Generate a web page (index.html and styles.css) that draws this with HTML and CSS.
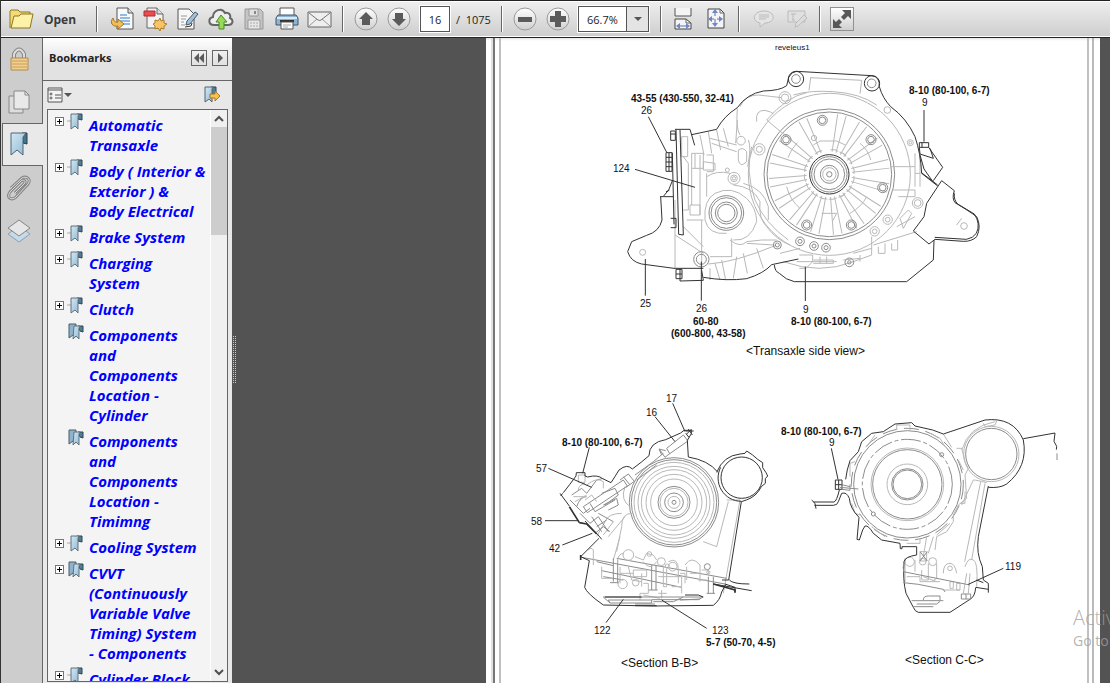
FILE: index.html
```
<!DOCTYPE html>
<html lang="en">
  <head>
    <meta charset="utf-8" />
    <title>Reader</title>
    <link rel="stylesheet" href="styles.css">
  </head>
  <body>
    <!-- shared icons -->
    <svg class="defs" aria-hidden="true">
      <linearGradient id="blue" x1="0" y1="0" x2="1" y2="1">
        <stop offset="0" stop-color="#d3e8f5" />
        <stop offset="1" stop-color="#8fb8d2" />
      </linearGradient>
      <linearGradient id="round" x1="0" y1="0" x2="0" y2="1">
        <stop offset="0" stop-color="#fff" />
        <stop offset="1" stop-color="#cfcfcf" />
      </linearGradient>
      <symbol id="mark" viewBox="0 0 17 18">
        <path d="M0 8h4" stroke="#aaa" />
        <path d="M10 1h5v6l-4-1z" fill="#4f8098" stroke="#33424c" />
        <path d="M4 1h8l-1 2v13l-3-3-4 3z" fill="url(#blue)" stroke="#60717c" />
      </symbol>
      <symbol id="marks" viewBox="0 0 17 18">
        <path d="M2 1h7v13l-3-2-4 3z" fill="#8db4cc" stroke="#4b5c67" />
        <path d="M11 3h5v6l-3-1z" fill="#4f8098" stroke="#33424c" />
        <path d="M7 3h6l-1 2v11l-3-3-3 3z" fill="url(#blue)" stroke="#60717c" />
      </symbol>
    </svg>

    <header class="toolbar">
      <button class="open" type="button">
        <svg width="26" height="22" viewBox="0 0 26 22">
          <path d="M1 20V3l1-1h7l2 2h10v4" fill="#f3dc78" stroke="#8e7420" />
          <path d="M2 20 5 8h5l2-2h12l-3 14z" fill="#fdf3a8" stroke="#8e7420" stroke-linejoin="round" />
        </svg>
        Open
      </button>
      <div class="group">
        <button type="button" aria-label="Export">
          <svg width="24" height="24" viewBox="0 0 24 24">
            <path d="M7 1h11l5 5v16H7z" fill="#f8f8f8" stroke="#555" />
            <path d="M18 1v5h5" fill="#ddd" stroke="#555" />
            <path d="M10 8h7M10 11h10M10 14h10M13 17h7" stroke="#2b7fd6" />
            <path d="M3 11c-4 5 0 9 5 8v3l6-5-6-5v3c-3 1-4-1-5-4z" fill="#f3bf55" stroke="#a5762a" />
          </svg>
        </button>
        <button type="button" aria-label="Create PDF">
          <svg width="24" height="24" viewBox="0 0 24 24">
            <path d="M4 1h10l6 6v14H4z" fill="#f2f2f2" stroke="#666" />
            <path d="M14 1v6h6" fill="#ddd" stroke="#666" />
            <path d="M1 4h11v5H1z" fill="#ec4c50" stroke="#a92c30" />
            <path d="m17 11 1 3 3-1v3l3 1-3 2v3l-3-1-1 3-2-3-3 1v-3l-2-2 2-1v-3l3 1z" fill="#f6c568" stroke="#b07d28" />
          </svg>
        </button>
        <button type="button" aria-label="Edit">
          <svg width="24" height="24" viewBox="0 0 24 24">
            <path d="M2 2h11l5 5v15H2z" fill="#f7f7f7" stroke="#555" />
            <path d="M5 9h6M5 12h5M5 15h3M5 18h4" stroke="#999" />
            <path d="m10 18 1-4 8-9 3 2-8 10z" fill="#a4c0d6" stroke="#445a6c" />
            <path d="m9 20 6-1 1-3" fill="none" stroke="#333" />
          </svg>
        </button>
        <button type="button" aria-label="Upload">
          <svg width="26" height="24" viewBox="0 0 26 24">
            <path d="M6 18C0 18 0 11 5 10 5 3 14 0 17 6c4-1 6 2 5 5 4 2 3 7-2 7z" fill="#eee" stroke="#666" stroke-width="2" />
            <path d="m13 8 6 7h-3v7h-5v-7H8z" fill="#97d95a" stroke="#4a8b25" />
          </svg>
        </button>
        <button type="button" aria-label="Save">
          <svg width="24" height="24" viewBox="0 0 24 24">
            <path d="M3 2h15l3 3v17H3z" fill="#c4c4c4" stroke="#999" />
            <path d="M7 2h9v7H7z" fill="#e2e2e2" stroke="#999" />
            <path d="M13 4v3" stroke="#888" stroke-width="2" />
            <path d="M6 13h12v9H6z" fill="#e6e6e6" stroke="#999" />
            <path d="M8 16h8M8 19h8" stroke="#aaa" stroke-dasharray="2 1" />
          </svg>
        </button>
        <button type="button" aria-label="Print">
          <svg width="24" height="24" viewBox="0 0 24 24">
            <path d="M5 1h14v9H5z" fill="#fff" stroke="#555" />
            <path d="M3 8h18l2 3v7H1v-7z" fill="#8db4d2" stroke="#3f566a" />
            <path d="M2 11h20" stroke="#d9ebf7" stroke-width="2" />
            <path d="M5 14h14" stroke="#333" stroke-width="2" />
            <path d="M6 15h12v7H6z" fill="#fff" stroke="#555" />
            <path d="M8 18h8M8 20h5" stroke="#aaa" />
          </svg>
        </button>
        <button type="button" aria-label="Mail">
          <svg width="26" height="20" viewBox="0 0 26 20">
            <path d="M1 3h23v15H1z" fill="#efefef" stroke="#666" />
            <path d="m2 17 8-7m13 7-8-7" stroke="#999" />
            <path d="m2 4 9 7q2 1 3 0l9-7" fill="none" stroke="#777" />
          </svg>
        </button>
      </div>
      <div class="group">
        <button type="button" aria-label="Previous page">
          <svg width="24" height="24" viewBox="0 0 24 24">
            <circle cx="12" cy="12" r="11" fill="url(#round)" stroke="#999" />
            <path d="m12 5 7 7h-3v6H8v-6H5z" fill="#5b5b5b" />
          </svg>
        </button>
        <button type="button" aria-label="Next page">
          <svg width="24" height="24" viewBox="0 0 24 24">
            <circle cx="12" cy="12" r="11" fill="url(#round)" stroke="#999" />
            <path d="m12 19 7-7h-3V6H8v6H5z" fill="#5b5b5b" />
          </svg>
        </button>
        <input class="page-no" type="text" value="16" aria-label="Page" />
        <span class="total">/&nbsp; 1075</span>
      </div>
      <div class="group zoom">
        <button type="button" aria-label="Zoom out">
          <svg width="24" height="24" viewBox="0 0 24 24">
            <circle cx="12" cy="12" r="11" fill="url(#round)" stroke="#999" />
            <path d="M5 10h14v5H5z" fill="#5b5b5b" />
          </svg>
        </button>
        <button type="button" aria-label="Zoom in">
          <svg width="24" height="24" viewBox="0 0 24 24">
            <circle cx="12" cy="12" r="11" fill="url(#round)" stroke="#999" />
            <path d="M4 9h5V4h6v5h5v6h-5v5H9v-5H4z" fill="#5b5b5b" />
          </svg>
        </button>
        <select class="scale" aria-label="Zoom">
          <option>66.7%</option>
        </select>
      </div>
      <div class="group fit">
        <button type="button" aria-label="Fit width">
          <svg width="20" height="24" viewBox="0 0 20 24">
            <path d="M2 1v8h16V1" fill="#f4f4f4" stroke="#555" />
            <path d="M2 22V12h11l5 4v6z" fill="#f4f4f4" stroke="#444" />
            <path d="M13 12v4h5" fill="none" stroke="#666" />
            <path d="M4 19h12" stroke="#5870b4" />
            <path d="m3 19 4-3v6zM17 19l-4-3v6z" fill="#6f86c4" />
          </svg>
        </button>
        <button type="button" aria-label="Fit page">
          <svg width="20" height="24" viewBox="0 0 20 24">
            <path d="M2 2h12l4 4v15H2z" fill="#f4f4f4" stroke="#444" />
            <path d="M14 2v4h4" fill="none" stroke="#666" />
            <path d="M9 4v15M3 12h13" stroke="#5870b4" stroke-dasharray="5 3" />
            <path d="m9 2 3 4H6zM9 20l3-4H6zM2 12l4-3v6zM17 12l-4-3v6z" fill="#6f86c4" />
          </svg>
        </button>
      </div>
      <div class="group">
        <button type="button" aria-label="Comment" disabled>
          <svg width="22" height="20" viewBox="0 0 22 20">
            <path d="M11 2c12 0 12 12 1 12l-5 4v-4C-2 12 0 2 11 2z" fill="#e4e4e4" stroke="#bbb" />
            <path d="M6 6h10M6 8h10M6 10h7" stroke="#bbb" />
          </svg>
        </button>
        <button type="button" aria-label="Highlight text" disabled>
          <svg width="22" height="20" viewBox="0 0 22 20">
            <path d="M2 2h17v11H2z" fill="#e0e0e0" stroke="#bbb" />
            <path d="M5 5h5M7 5v6M6 11h3" stroke="#bbb" />
            <path d="m9 18 1-4 8-8 3 3-9 8z" fill="#ddd" stroke="#bbb" />
          </svg>
        </button>
      </div>
      <div class="group full">
        <button type="button" aria-label="Full screen">
          <svg width="24" height="24" viewBox="0 0 24 24">
            <path d="M0 0h24v24H0z" fill="#919191" />
            <path d="M1 1h22v22H1z" fill="url(#round)" />
            <path d="M12 3h9v9l-3-3-4 4-3-3 4-4zM3 12l3 3 3-3 3 3-3 3 3 3H3z" fill="#575757" />
          </svg>
        </button>
      </div>
    </header>

    <main class="workspace">
      <nav class="rail" aria-label="Panels">
        <button type="button" aria-label="Security">
          <svg width="24" height="26" viewBox="0 0 24 26">
            <path d="M7 12V8q5-9 10 0v4" fill="none" stroke="#858585" stroke-width="4" />
            <path d="M7 12V8q5-9 10 0v4" fill="none" stroke="#ddd" stroke-width="2" />
            <path d="M4 12h17v12H4z" fill="#f3cf8e" stroke="#ae8b50" />
            <path d="M5 15h15M5 18h15M5 21h15" stroke="#c89e5c" />
          </svg>
        </button>
        <button type="button" aria-label="Pages">
          <svg width="24" height="26" viewBox="0 0 24 26">
            <path d="M2 7h14v17H2z" fill="#ddd" stroke="#888" />
            <path d="M7 2h11l4 4v14H7z" fill="#e9e9e9" stroke="#888" />
            <path d="M18 2v4h4" fill="none" stroke="#888" />
          </svg>
        </button>
        <button class="active" type="button" aria-label="Bookmarks">
          <svg width="20" height="26" viewBox="0 0 20 26">
            <path d="M13 1h5v11l-4-1z" fill="#42748e" stroke="#283b48" />
            <path d="M2 1h15l-3 4v18l-6-5-6 5z" fill="url(#blue)" stroke="#4e6473" />
          </svg>
        </button>
        <button type="button" aria-label="Attachments">
          <svg width="26" height="26" viewBox="0 0 26 26">
            <path d="m9 18 9-9c3-3-1-5-3-3L4 17c-4 6 2 9 6 5L22 9c4-6-3-8-6-6L5 13" fill="none" stroke="#858585" stroke-width="3" />
            <path d="m9 18 9-9c3-3-1-5-3-3L4 17c-4 6 2 9 6 5L22 9c4-6-3-8-6-6L5 13" fill="none" stroke="#ddd" />
          </svg>
        </button>
        <button type="button" aria-label="Layers">
          <svg width="26" height="26" viewBox="0 0 26 26">
            <path d="M2 16 13 8l11 8-11 8z" fill="#c6dbe9" stroke="#8ba1af" />
            <path d="m2 10 11-8 11 8-11 8z" fill="#e6e6e6" stroke="#858585" />
          </svg>
        </button>
      </nav>

      <section class="panel">
        <div class="panel-head">
          <h2>Bookmarks</h2>
          <button type="button" aria-label="Collapse">
            <svg width="14" height="14"><path d="M7 2v10L2 7zM12 2v10L7 7z" fill="#5b5b5b" /></svg>
          </button>
          <button type="button" aria-label="Expand">
            <svg width="14" height="14"><path d="M5 2v10l5-5z" fill="#5b5b5b" /></svg>
          </button>
        </div>
        <div class="panel-tools">
          <button type="button" aria-label="Options">
            <svg width="26" height="16" viewBox="0 0 26 16">
              <path d="M1 1h14v14H1z" fill="#f4f4f4" stroke="#555" />
              <path d="M1 3h14M8 8h6M8 11h6" stroke="#555" />
              <circle cx="4" cy="7" r="1" fill="none" stroke="#555" />
              <circle cx="4" cy="11" r="1" fill="none" stroke="#555" />
              <path d="M17 6h8l-4 4z" fill="#555" />
            </svg>
          </button>
          <button type="button" aria-label="Find current bookmark">
            <svg width="18" height="18" viewBox="0 0 18 18">
              <path d="M8 1h5v9H8z" fill="#4f8098" stroke="#33424c" />
              <path d="M2 1h8L9 3v13l-3-3-4 3z" fill="url(#blue)" stroke="#55656f" />
              <path d="M7 8h5V5l5 5-5 5v-3H7z" fill="#f7c34c" stroke="#a5762a" />
            </svg>
          </button>
        </div>
        <div class="tree">
          <ul>
            <li><button class="toggle" type="button" aria-label="Expand"></button><svg class="mark"><use href="#mark" /></svg><a href="#">Automatic<br />Transaxle</a></li>
            <li><button class="toggle" type="button" aria-label="Expand"></button><svg class="mark"><use href="#mark" /></svg><a href="#">Body ( Interior &amp;<br />Exterior ) &amp;<br />Body Electrical</a></li>
            <li><button class="toggle" type="button" aria-label="Expand"></button><svg class="mark"><use href="#mark" /></svg><a href="#">Brake System</a></li>
            <li><button class="toggle" type="button" aria-label="Expand"></button><svg class="mark"><use href="#mark" /></svg><a href="#">Charging<br />System</a></li>
            <li><button class="toggle" type="button" aria-label="Expand"></button><svg class="mark"><use href="#mark" /></svg><a href="#">Clutch</a></li>
            <li class="leaf"><svg class="mark"><use href="#marks" /></svg><a href="#">Components<br />and<br />Components<br />Location -<br />Cylinder</a></li>
            <li class="leaf"><svg class="mark"><use href="#marks" /></svg><a href="#">Components<br />and<br />Components<br />Location -<br />Timimng</a></li>
            <li><button class="toggle" type="button" aria-label="Expand"></button><svg class="mark"><use href="#mark" /></svg><a href="#">Cooling System</a></li>
            <li><button class="toggle" type="button" aria-label="Expand"></button><svg class="mark"><use href="#marks" /></svg><a href="#">CVVT<br />(Continuously<br />Variable Valve<br />Timing) System<br />- Components</a></li>
            <li><button class="toggle" type="button" aria-label="Expand"></button><svg class="mark"><use href="#mark" /></svg><a href="#">Cylinder Block</a></li>
          </ul>
          <div class="scrollbar">
            <svg width="15" height="17"><path d="m4 11 4-4 4 4" fill="none" stroke="#505050" stroke-width="2" /></svg>
            <div class="thumb"></div>
            <svg class="down" width="15" height="17"><path d="m4 6 4 4 4-4" fill="none" stroke="#505050" stroke-width="2" /></svg>
          </div>
        </div>
      </section>

      <div class="splitter"></div>

      <section class="document">
        <svg class="sheet" viewBox="486 38 614 645">
          <path d="M492 38v645" stroke="#c4c4c4" />
          <path d="M494 38v645" stroke="#777" stroke-width="2" />
          <path d="M500 38v645M1088 38v645" stroke="#c0c0c0" stroke-width="2" />
          <path d="M1093 38v645" stroke="#777" />

          <!-- transaxle side view -->
          <svg x="600" y="40" width="410" height="330" viewBox="0 0 1230 990" class="drawing">
            <defs>
              <path id="spoke" d="M682 335 675 222M694 335l7-113M676 330q12-5 24 0" />
              <g id="bolt"><circle r="15" /><circle r="10" /></g>
            </defs>
            <g class="thin">
              <circle cx="688" cy="403" r="243" />
              <circle cx="688" cy="403" r="196" class="mid" />
              <circle cx="688" cy="403" r="187" class="mid" />
              <path d="M592 308 q-20 20-28 45M780 310q25 20 32 50M560 440q10 40 40 65M800 470q-15 30-50 50M665 520h45l-12 22M640 315l20-12h50l26 12" />
              <use href="#spoke" transform="rotate(12 688 403)" />
              <use href="#spoke" transform="rotate(34 688 403)" />
              <use href="#spoke" transform="rotate(57 688 403)" />
              <use href="#spoke" transform="rotate(80 688 403)" />
              <use href="#spoke" transform="rotate(103 688 403)" />
              <use href="#spoke" transform="rotate(126 688 403)" />
              <use href="#spoke" transform="rotate(149 688 403)" />
              <use href="#spoke" transform="rotate(172 688 403)" />
              <use href="#spoke" transform="rotate(194 688 403)" />
              <use href="#spoke" transform="rotate(217 688 403)" />
              <use href="#spoke" transform="rotate(240 688 403)" />
              <use href="#spoke" transform="rotate(262 688 403)" />
              <use href="#spoke" transform="rotate(285 688 403)" />
              <use href="#spoke" transform="rotate(308 688 403)" />
              <use href="#spoke" transform="rotate(334 688 403)" />
              <circle cx="642" cy="294" r="8" />
              <circle cx="688" cy="403" r="27" class="mid" />
              <circle cx="688" cy="403" r="20" />
              <circle cx="688" cy="403" r="8" class="mid" />
            </g>
            <g class="mid">
              <circle cx="688" cy="403" r="59" stroke="#333" />
              <circle cx="688" cy="403" r="53" />
              <circle cx="688" cy="403" r="46" />
              <use href="#bolt" x="667" y="241" />
              <use href="#bolt" x="558" y="299" />
              <use href="#bolt" x="813" y="299" />
              <use href="#bolt" x="848" y="443" />
              <use href="#bolt" x="754" y="555" />
              <use href="#bolt" x="620" y="555" />
              <circle cx="588" cy="117" r="13" />
              <circle cx="815" cy="130" r="13" />
            </g>
            <!-- housing ribs and flanges -->
            <g class="thin">
              <circle cx="555" cy="173" r="18" /><circle cx="555" cy="173" r="11" />
              <circle cx="862" cy="210" r="10" /><circle cx="931" cy="308" r="9" /><circle cx="931" cy="308" r="4" />
              <circle cx="953" cy="489" r="16" /><circle cx="953" cy="489" r="10" />
              <circle cx="863" cy="539" r="14" /><circle cx="863" cy="539" r="7" />
              <circle cx="824" cy="574" r="14" /><circle cx="824" cy="574" r="7" />
              <circle cx="423" cy="302" r="13" /><circle cx="478" cy="328" r="17" /><circle cx="478" cy="328" r="9" />
              <circle cx="382" cy="390" r="6" /><circle cx="402" cy="415" r="18" /><circle cx="402" cy="415" r="10" /><circle cx="402" cy="415" r="5" />
              <path d="M580 165q50-15 120-10 80 5 130 40M632 113l-5 38M630 113l155 8-5 40M500 240q60-70 120-82M470 245q-5-35 25-34 20 5 25 10M500 240l60 50" />
              <path d="M412 205q-5 60 8 80M420 200q15-35 55-35 45 5 70 8M412 240l-5 70M445 300q10 20-2 80M415 330q15-10 25 5v30q-20 20-25-5zM455 320q-20 70 10 160 30 70 100 120" />
              <path d="M400 435q60 5 80 50-5 50 20 75 30 40 70 55M430 430q60 15 75 70v40M870 380h75M875 450h70v20h-50M945 340v100M960 350v90M945 400h15M900 535l25-25 10 10-25 45zM890 560l55-30" />
              <path d="M300 285l12 60M325 275l10 65M350 270l12 60M370 265l15 55M335 310l75 25M330 295l80 20" />
              <path d="M245 290h18v60h-18zM250 350l15 20v140h-15M300 345v180M275 340h35v45h-35zM285 340v45M310 365l35 5v20h-35zM320 345h20v50h-20M275 385v110M270 495h30v30h-30zM260 540h50M320 410q30-20 70-10M320 400v70" />
              <path d="M390 600q30 25 50 5l45-5h45M440 610l80 5M330 650h65v-55M345 670l15 50M365 660l12 60M410 650l-10 65M430 640l12 60M470 625l20 60M325 672q80-5 200-55M330 685v35" />
              <path d="M225 585l85 55M225 480v205M305 540v140M250 560l60 60" />
              <path d="M540 640l60-15M550 665q110 40 210 0l55-20M760 640l55-15M590 665h120M780 645v20M815 590v55M835 620v20h20v-30M780 655l-50 5M820 615l130-40M875 610v20h18v-30" />
            </g>
            <g class="mid">
              <circle cx="379" cy="519" r="52" />
              <circle cx="379" cy="519" r="46" />
              <circle cx="379" cy="519" r="33" /><circle cx="379" cy="519" r="26" />
              <circle cx="304" cy="658" r="23" /><circle cx="304" cy="658" r="15" />
              <circle cx="128" cy="637" r="9" class="thin" />
              <circle cx="532" cy="615" r="12" /><circle cx="532" cy="615" r="6" />
              <circle cx="600" cy="604" r="13" /><circle cx="600" cy="604" r="6" />
              <circle cx="642" cy="618" r="13" /><circle cx="642" cy="618" r="6" />
              <circle cx="678" cy="623" r="13" /><circle cx="678" cy="623" r="6" />
              <circle cx="748" cy="667" r="13" /><circle cx="748" cy="667" r="5" />
              <path d="M598 645h40v20l-20 20h-20M640 660h60v10h-60M660 650v20M680 650v20M380 580q-55 5-65-40-5-60 30-80 50-25 95 15 30 30 30 70-20 60-70 55" class="thin" />
              <path d="M1070 555l15-20" class="thin" />
              <circle cx="1092" cy="558" r="10" class="thin" />
            </g>
            <g class="dark">
              <path d="M275 284 350 268Q372 228 412 203 440 162 490 153 540 152 560 137L566 112Q575 94 590 94L815 107Q840 110 838 140 848 175 872 200 920 235 945 290 962 340 965 400L1013 438" />
              <path d="M565 117a23 23 0 0 0 46 0 23 23 0 0 0-46 0M793 130a23 23 0 0 0 46 0 23 23 0 0 0-46 0" />
              <path d="M225 268h45l14 48M228 268l8 315 14 2-10-315" />
              <path d="M212 273h14v28h-14zM212 282h14M198 338h18v56h-18zM198 352h18M198 366h18M198 380h18M207 338v56" />
              <path d="M217 338l5 215M218 420l-12 30-15 18M180 470h40M182 470l4 70Q178 575 140 586L95 605 83 635Q92 665 125 672L222 685H310M198 455l10-4M212 535h16v28h-16" />
              <path d="M228 688h18v28h-18zM228 702h18M240 685v38l70-2-5-30M310 712q70 12 130 4 50-15 75-42l80-17" />
              <path d="M523 675q2 20 15 25 20 20 45 25h337l80-65 2-60" />
              <path d="M1025 422l38 30q-8 23 2 36 45 27 65 42 15 30 0 60-15 15-40 14l-85-6-18 14-47-39 32-43 8-40zM1013 435l-50-38M1063 460q-2 20 10 32l50 30q20 30 6 58-10 15-30 18l-95-6" />
              <path d="M958 308h28v14h-28zM966 308v14M958 322l2 20 40 13M986 322l42 60-28 40M960 345l12 42 28 40M1000 355l-10-30" />
              <path d="M145 230l55 107M105 388l180 54M304 665v117M136 657v110M616 680v103M972 210v95" />
            </g>
          </svg>

          <!-- section B-B -->
          <svg x="520" y="380" width="270" height="300" viewBox="0 0 810 900" class="drawing">
            <g class="thin">
              <circle cx="462" cy="367" r="134" class="mid" />
              <circle cx="462" cy="367" r="128" class="mid" />
              <circle cx="462" cy="367" r="120" />
              <circle cx="462" cy="367" r="108" />
              <circle cx="462" cy="367" r="98" />
              <circle cx="462" cy="367" r="84" />
              <circle cx="462" cy="367" r="70" />
              <circle cx="462" cy="367" r="48" class="mid" />
              <circle cx="462" cy="367" r="42" />
              <circle cx="462" cy="367" r="28" class="mid" />
              <circle cx="462" cy="367" r="18" />
              <circle cx="462" cy="367" r="6" class="mid" />
              <path d="M620 360h40l-50 280M625 365l-35 135-40-15M330 380q-30-20-15-60M335 400q-30 0-30 40l-15 75M300 470l-20 70M305 400q-40 0-50 25l-25 45M315 410l-50 60M280 425l-30 40" />
            </g>
            <g class="mid">
              <path d="M345 285l55-40 30-25M350 300l60-45M190 380l120-80 12 18-120 80zM300 300l25-18 18 22-25 18M310 290l20 25M440 205l50-40 14 18-55 38zM420 210l15 22 15-12M425 225l-8-18 20 5" />
              <path d="M155 345l30-20 15 15 30-40 20-5M150 360l40 40 20-15M170 380q10-30 30-30M180 400l30 30 25-20 30 45M210 370l15 25 60-35M245 340l40-15 10 20-40 30M235 400l45 25M250 375l40-20 5 20-30 15M215 410l30 45M230 440l30-20M225 460l25-20 20 15" />
              <path d="M200 315q30-25 50-10v20M175 330q0-15 20-20M175 285h20v22h-20zM160 350h30M165 365l35-20M195 360l20-15 15 20" class="thin" />
              <path d="M185 532l430 80M245 572l240 50M230 545l50 12M290 535l330 60M250 590l60 10" class="mid" />
              <path d="M280 535v70M293 540v70M270 608h25M395 555v75M408 555v75M385 630h28M565 590v50M580 590v50M560 640h25" />
            </g>
            <g class="thin">
              <circle cx="325" cy="525" r="16" /><circle cx="388" cy="522" r="7" /><circle cx="308" cy="612" r="14" /><circle cx="347" cy="608" r="10" /><circle cx="424" cy="545" r="12" /><circle cx="458" cy="560" r="13" /><circle cx="562" cy="560" r="9" class="mid" /><circle cx="442" cy="558" r="6" /><circle cx="565" cy="577" r="5" />
              <path d="M205 510q8-10 15 0v45M300 560v50M312 520q-20 0-20 30M345 530l25 10 10-20 20 5 10 15M340 570h40v20h-40zM365 580v40M370 545q20 30 40 0M430 560v60h10v-55M445 545q30-15 30 25v40M495 555q20-30 45 0v50M500 560v40M510 580h25M480 580h15v30M545 570h20v15M415 590h70v30M370 610h15v30h-25v20M325 560l10 40 30 5M535 600h25M245 560v35h30" />
              <path d="M425 630v25M415 640h25M370 645l50 10M300 580h40M455 620h30v20" />
            </g>
            <g class="dark">
              <path d="M245 478l-8-10-42-45M237 475L182 530l26 12-14 80Q200 640 250 675l150 3 180-2q20-15 25-40l12-22" />
              <path d="M250 651h300l-15 8H395M265 660h130v9H270zM345 672h60M250 651l20 18M400 665h60l30-14M480 660l60-3" class="mid" />
              <path d="M255 651h110M345 677h65M495 645h40l14 6" />
              <path d="M120 340l28 38M122 348l6-8M130 338q20-25 38-50l1-10h26v10l8 3q30-8 45 5l25 12Q285 290 297 270q25-20 40-3 30-22 50-40 0-40 50-48l45-20 10-8h22v10l-12 20 3 50q60 10 88 45" />
              <path d="M148 380l30 48M178 428l22 4 30 30" class="thick" />
              <path d="M590 277q20-50 70-55l15-2 5-7 18 12 15 13 15 10v15l10 15 5 10-7 8v14l-12 10q-15 30-45 40l-15 5-38 235h-20" />
              <circle cx="665" cy="293" r="62" />
              <path d="M602 262a70 70 0 0 0 62 102M628 600q10 12 60 12M615 612l30 10v15M580 612l115 20" />
              <path d="M182 525v15M580 612l65 18v8" class="thick" />
              <path d="M497 153h24M505 147l12 18M515 147l-15 15M497 160l10 12M458 70l37 85M405 110l60 75M208 202l-20 78M85 265l130 57M75 422h100M127 495l90-35M258 728l52-70M425 660l135 85" />
            </g>
          </svg>

          <!-- section C-C -->
          <svg x="770" y="400" width="340" height="283" viewBox="0 0 1020 849" class="drawing">
            <g class="mid">
              <circle cx="412" cy="253" r="61" class="thin" />
              <circle cx="412" cy="253" r="47" />
              <circle cx="412" cy="253" r="43" />
              <circle cx="412" cy="253" r="109" class="thin" />
              <circle cx="412" cy="253" r="104" />
              <circle cx="412" cy="253" r="135" stroke-dasharray="60 8 12 8" />
              <circle cx="412" cy="253" r="161" />
              <circle cx="412" cy="253" r="168" stroke-dasharray="45 20" />
              <circle cx="515" cy="164" r="6" /><circle cx="310" cy="342" r="6" />
              <circle cx="664" cy="162" r="83" class="thin" />
              <circle cx="664" cy="162" r="77" />
            </g>
            <g class="thin">
              <path d="M575 150q20-70 100-85M520 102l25 40M560 145h15l10 40 10 20-10 20 5 70-25 20-15 30v20l-20 30-30 15-5 40M610 240l-35 75M610 240q10 0 40 8M632 245l-48 240M645 250l-40 230M585 500q10-30 25-20 15 5 10 80M590 520l-10 60M600 520l-5 60M470 410l-10 60M490 410l-15 50M450 455h20v28h-20z" />
              <circle cx="419" cy="485" r="14" /><circle cx="458" cy="485" r="10" /><circle cx="488" cy="485" r="12" /><circle cx="540" cy="505" r="7" />
              <path d="M405 475v70M435 480v35M475 490v50h-20v-30M500 490v45l-15 10M520 520q0-30 20-30 15 0 20 30M410 530h40v15h60M460 530l40 15M540 545v20h10v-20zM560 550v20h10v-20zM520 570h50M640 70l5 10 30-5 5-12M380 90v-15h40v15M480 100l30 15 15 25M240 230v-40l15-5M245 310l10 30 15 5M305 380l40 30M410 430h40v-12M500 405l40-35M570 310h15v-35M565 180l15 30M290 140l25-35" />
            </g>
            <g class="dark">
              <path d="M227 238Q230 210 240 182L265 155 275 125 305 100 340 95 375 72 425 68 435 78 488 90 520 102M520 102 645 60Q730 50 760 120 775 200 710 252 690 265 655 262" />
              <path d="M655 258 625 410Q618 460 637 500L640 540 655 550V578M617 562 655 568M620 540 640 548M617 563Q615 590 600 598L540 637H445Q435 635 430 622L408 580Q398 540 402 485 405 470 440 465V440H396V446H391L390 430 335 420 310 400Q295 375 285 378L278 390 268 420 261 418 267 352Q240 325 238 295 230 275 215 280L205 305Q202 316 190 316H133M125 300 135 310 138 326M130 306H192Q200 304 208 270" />
              <path d="M402 485q-5 20 0 32M400 515l200 40M400 548l45 5 75 15 5 8" class="mid" />
              <path d="M425 602h95M440 612h60l10-8M460 600q0-12 15-12h35v12M430 620h60" class="mid" />
              <path d="M196 240h20v28h-20zM196 254h20M206 240v28" />
              <path d="M210 262l55 5M215 254l25 6M215 268l25 3v-18" class="mid" />
              <path d="M574 582h28v15h-28zM588 582v15M450 455l22 28M472 455l-22 28" class="mid" />
              <path d="M760 116l95-17-3 25 8 15-1 10" />
              <path d="M861 160v20" class="mid" />
              <path d="M184 145l20 93M700 505l-105 48" />
            </g>
          </svg>

          <text class="label tiny" x="775" y="50">reveleus1</text>
          <g class="label bold">
            <text x="631" y="102">43-55 (430-550, 32-41)</text>
            <text x="909" y="94">8-10 (80-100, 6-7)</text>
            <text x="693" y="325">60-80</text>
            <text x="671" y="337">(600-800, 43-58)</text>
            <text x="791" y="325">8-10 (80-100, 6-7)</text>
            <text x="562" y="446">8-10 (80-100, 6-7)</text>
            <text x="781" y="435">8-10 (80-100, 6-7)</text>
            <text x="706" y="646">5-7 (50-70, 4-5)</text>
          </g>
          <g class="label">
            <text x="641" y="114">26</text>
            <text x="613" y="172">124</text>
            <text x="922" y="106">9</text>
            <text x="640" y="307">25</text>
            <text x="696" y="312">26</text>
            <text x="803" y="313">9</text>
            <text x="666" y="402">17</text>
            <text x="646" y="416">16</text>
            <text x="536" y="472">57</text>
            <text x="531" y="525">58</text>
            <text x="549" y="552">42</text>
            <text x="594" y="634">122</text>
            <text x="712" y="634">123</text>
            <text x="829" y="446">9</text>
            <text x="1005" y="570">119</text>
          </g>
          <g class="label caption">
            <text x="746" y="355">&lt;Transaxle side view&gt;</text>
            <text x="621" y="667">&lt;Section B-B&gt;</text>
            <text x="905" y="664">&lt;Section C-C&gt;</text>
          </g>
        </svg>
      </section>
    </main>

    <div class="watermark">
      <p class="big">Activ</p>
      <p>Go to</p>
    </div>
  </body>
</html>
```
FILE: styles.css
```
* {
  box-sizing: border-box;
}
body {
  display: flex;
  flex-direction: column;
  height: 100vh;
  margin: 0;
  overflow: hidden;
  border-left: 1px solid #333;
  background-color: #535353;
  color: #222;
  font-family: "Open Sans", "Noto Sans", sans-serif;
  font-size: 11px;
}
button {
  display: flex;
  align-items: center;
  justify-content: center;
  padding: 0;
  border: none;
  background: none;
  color: inherit;
  font: inherit;
}
svg {
  display: block;
  flex: none;
}
.defs {
  position: absolute;
  width: 0;
  height: 0;
}

/* toolbar */
.toolbar {
  display: flex;
  flex: none;
  align-items: center;
  height: 38px;
  border-top: 1px solid #222;
  border-bottom: 1px solid #222;
  background: linear-gradient(#efefef, #cdcdcd);
  box-shadow: inset 0 1px #fff, inset 0 -1px #fff;
}
.open {
  gap: 9px;
  width: 95px;
  padding-right: 12px;
  color: #3c3c3c;
  font-size: 12px;
  font-weight: bold;
}
.group {
  display: flex;
  align-items: center;
  height: 26px;
  padding: 0 6px 0 8px;
  border-left: 1px solid #666;
  box-shadow: inset 1px 0 #fff;
}
.group button {
  width: 33px;
  height: 26px;
}
.group:nth-child(3) {
  padding-left: 6px;
}
.page-no {
  width: 30px;
  height: 26px;
  margin: 0 6px 0 5px;
  padding: 0;
  border: 1px solid #555;
  background: #fff;
  box-shadow: 0 0 0 1px #fff;
  color: inherit;
  font: inherit;
  text-align: center;
}
.total {
  width: 39px;
  white-space: nowrap;
}
.scale {
  width: 71px;
  height: 26px;
  margin: 0 5px 0 4px;
  padding: 0 8px;
  border: 1px solid #555;
  border-radius: 0;
  background:
    linear-gradient(90deg, #555 1px, #e4e4e4 0) right / 22px 100% no-repeat,
    #fff;
  box-shadow: 0 0 0 1px #fff;
  color: inherit;
  font: inherit;
  appearance: none;
}
.zoom {
  position: relative;
  padding-left: 6px;
}
.zoom::after {
  position: absolute;
  top: 11px;
  right: 18px;
  border: 4px solid transparent;
  border-top-color: #555;
  border-bottom: none;
  content: "";
}
.fit,
.full {
  padding-left: 5px;
}

/* left rail */
.workspace {
  display: flex;
  flex: 1;
  min-height: 0;
}
.rail {
  flex: none;
  width: 42px;
  border-right: 1px solid #666;
  background: #cdcdcd;
}
.rail button {
  width: 36px;
  height: 43px;
}
.rail button:first-child {
  height: 42px;
}
.rail .active {
  width: 41px;
  margin-left: 1px;
  padding-right: 8px;
  border: 1px solid #666;
  border-right: none;
  background: #e9e9e9;
}

/* bookmarks */
.panel {
  display: flex;
  flex: none;
  flex-direction: column;
  width: 189px;
  background: #e8e8e8;
}
.panel-head {
  display: flex;
  align-items: center;
  gap: 5px;
  height: 43px;
  padding: 0 4px 3px 6px;
  border-bottom: 1px solid #666;
  background: linear-gradient(#fff, #e2e2e2 60%);
}
.panel-head h2 {
  flex: 1;
  margin: 0;
  font-size: 11px;
}
.panel-head button {
  width: 16px;
  height: 16px;
  border: 1px solid #666;
}
.panel-tools {
  display: flex;
  align-items: center;
  justify-content: space-between;
  height: 28px;
  padding: 0 11px 0 4px;
}
.tree {
  display: flex;
  flex: 1;
  min-height: 0;
  margin: 0 4px 1px;
  border: 1px solid #666;
  background: #f4f4f4;
}
.tree ul {
  flex: 1;
  min-width: 0;
  margin: 0;
  padding: 5px 0 0 7px;
  overflow: hidden;
  list-style: none;
}
.tree li {
  display: flex;
  margin-bottom: 6px;
}
.tree a {
  flex: none;
  color: #00f;
  font-size: 15px;
  font-style: italic;
  font-weight: bold;
  line-height: 20px;
  text-decoration: none;
}
.toggle {
  flex: none;
  width: 9px;
  height: 9px;
  margin-top: 2px;
  border: 1px solid #777;
  background:
    linear-gradient(#000, #000) center / 5px 1px no-repeat,
    linear-gradient(#000, #000) center / 1px 5px no-repeat,
    #fff;
}
.mark {
  width: 17px;
  height: 18px;
  margin: -2px 5px 0 3px;
}
.leaf {
  padding-left: 9px;
}
.scrollbar {
  display: flex;
  flex: none;
  flex-direction: column;
  width: 17px;
  border-left: 1px solid #fff;
  background: #f0f0f0;
}
.thumb {
  height: 108px;
  background: #cdcdcd;
}
.down {
  margin-top: auto;
}
.splitter {
  width: 4px;
  height: 48px;
  margin: 298px 0 0 1px;
  background:
    linear-gradient(90deg, transparent 50%, #535353 0) 0 0 / 2px 2px,
    linear-gradient(#ccc 50%, #535353 0) 0 0 / 2px 2px;
}

/* document */
.document {
  display: flex;
  flex: 1;
  justify-content: flex-end;
  min-width: 0;
  padding-right: 10px;
}
.sheet {
  width: 614px;
  height: 645px;
  background: linear-gradient(#e8e8e8, #fff 3px);
}
.drawing {
  fill: none;
  stroke-width: 3;
}
.thin {
  stroke: #b8b8b8;
}
.mid {
  stroke: #8c8c8c;
}
.dark {
  stroke: #333;
}
.dark .mid,
.mid .mid {
  stroke: #8c8c8c;
}
.thick {
  stroke-width: 5;
}
.label {
  fill: #111;
  font-family: "Liberation Sans", Arial, sans-serif;
  font-size: 10px;
}
.bold {
  font-weight: bold;
}
.tiny {
  font-size: 8px;
}
.caption {
  font-size: 12px;
}

/* system overlay in the corner */
.watermark {
  position: absolute;
  right: 0;
  bottom: 32px;
  width: 37px;
  overflow: hidden;
  color: rgba(160, 160, 160, 0.8);
  font-size: 14px;
  line-height: 20px;
  white-space: nowrap;
}
.watermark p {
  margin: 0;
}
.watermark .big {
  font-size: 20px;
  font-weight: 300;
  line-height: 26px;
}
```
